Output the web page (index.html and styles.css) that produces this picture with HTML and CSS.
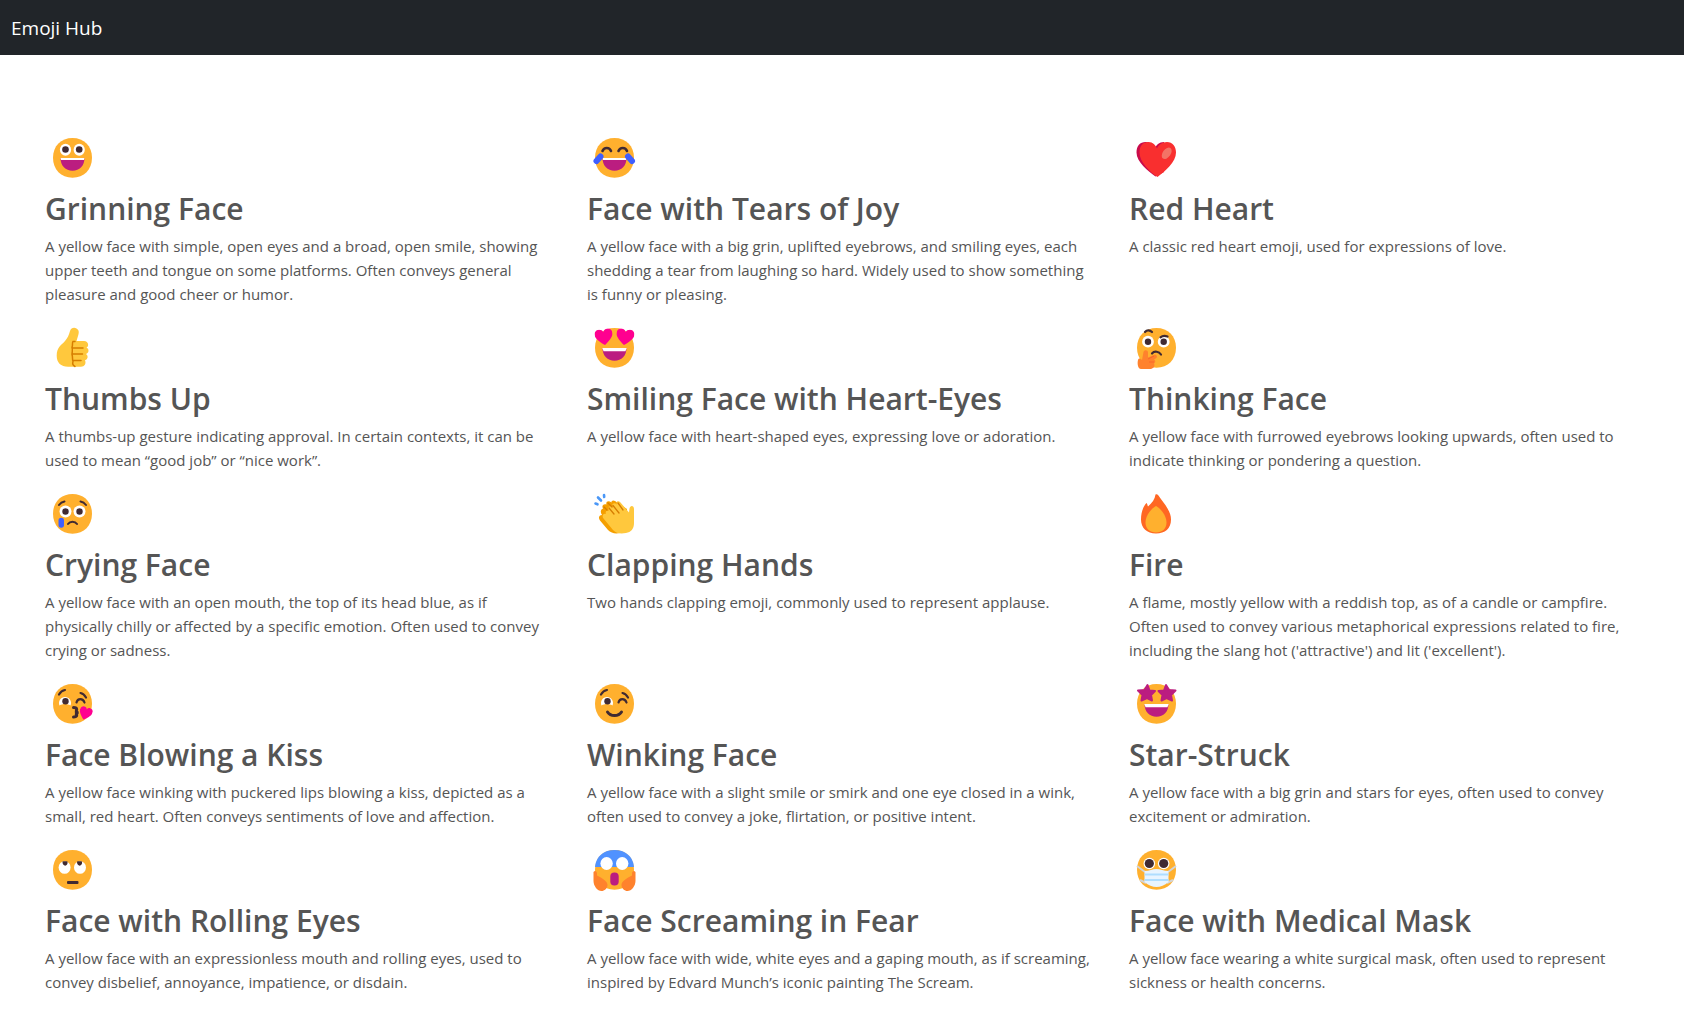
FILE: index.html
```html
<!DOCTYPE html>
<html lang="en">
<head>
<meta charset="utf-8">
<meta name="viewport" content="width=device-width, initial-scale=1">
<title>Emoji Hub</title>
<link rel="stylesheet" href="styles.css">
</head>
<body>
<svg class="sprite" aria-hidden="true">
  <symbol id="face" viewBox="0 0 56 56"><path d="M27.5 6C39 6 47 14 47 25.8S39 45.7 27.5 45.7 8 37.6 8 25.8 16 6 27.5 6z" fill="#ffb02e"/></symbol>
  <symbol id="grin" viewBox="0 0 56 56"><path d="M15.500 26h24c0 8-5 12.700-12 12.700S15.500 34 15.500 26z" fill="#bb1d80"/><path d="M15.500 26h24l-.5 2H16z" fill="#fff"/></symbol>
  <symbol id="heart" viewBox="0 0 20 18" preserveAspectRatio="none"><path d="M10 18C6 15 0 10 0 5.500 0 2 2.500 0 5.200 0 7.500 0 9.200 1.300 10 3.200 10.800 1.300 12.500 0 14.800 0 17.500 0 20 2 20 5.500 20 10 14 15 10 18z"/></symbol>
</svg>
<header class="navbar"><a class="brand" href="#">Emoji Hub</a></header>
<main class="grid">
  <article class="card">
    <svg class="emoji" viewBox="0 0 56 56" aria-hidden="true"><use href="#face"/><use href="#grin"/><g fill="#fff"><ellipse cx="20.500" cy="17.700" rx="5.600" ry="6"/><ellipse cx="34.200" cy="17.700" rx="5.600" ry="6"/></g><g fill="#402a32"><circle cx="20.500" cy="17.500" r="3.300"/><circle cx="34.200" cy="17.500" r="3.300"/></g></svg>
    <h2>Grinning Face</h2>
    <p>A yellow face with simple, open eyes and a broad, open smile, showing upper teeth and tongue on some platforms. Often conveys general pleasure and good cheer or humor.</p>
  </article>
  <article class="card">
    <svg class="emoji" viewBox="0 0 56 56" aria-hidden="true"><use href="#face"/><use href="#grin"/><g fill="none" stroke-linecap="round"><path d="M15.500 19c1.500-4 7-4 8.500 0M31.500 19c1.500-4 7-4 8.500 0" stroke="#402a32" stroke-width="2.600"/><path d="M13.500 24.500l-4 4.500M41 24.500l4 4.500" stroke="#3f5fff" stroke-width="6"/></g></svg>
    <h2>Face with Tears of Joy</h2>
    <p>A yellow face with a big grin, uplifted eyebrows, and smiling eyes, each shedding a tear from laughing so hard. Widely used to show something is funny or pleasing.</p>
  </article>
  <article class="card">
    <svg class="emoji" viewBox="0 0 56 56" aria-hidden="true"><path d="M26.500 44.500C19 39 7.500 30 7.500 20.500 7.500 14 11 10 16.500 10c4.500 0 8 3 9.500 6.500C27 13 30 10 35 10v30z" fill="#ca0b4a"/><path d="M28.500 45C21 40 10.500 30 10.500 20.500 10.500 14 14 10 19.500 10c4.500 0 7 3 8.500 6.500C29.500 13 33 10 38 10c5.500 0 9 4.500 9 10.500C47 30 36.500 39 28.500 45z" fill="#f92f2f"/><ellipse cx="37.700" cy="21.300" rx="4" ry="6.500" transform="rotate(35 37.700 21.300)" fill="#f37366"/></svg>
    <h2>Red Heart</h2>
    <p>A classic red heart emoji, used for expressions of love.</p>
  </article>
  <article class="card">
    <svg class="emoji" viewBox="0 0 56 56" aria-hidden="true"><path d="M25 9c1-3 4-4 6.500-2.500 3 1.700 2.500 4.500 1.500 7.500l-1.500 5H39c5 0 5 6 2.500 6.500 3 1.500 2.500 5.500-.5 6.500 2.500 1.500 2 5.500-1 6.300 1.500 3-.5 6.500-4 6.500H23c-7 0-11.300-4-11.300-11 0-9 5-10.800 8.300-14.800C22.500 16 24 13 25 9z" fill="#ffc83d"/><path d="M30 19.500h-2c-1 1 0 3-1 6 1 3 0 4 0 7 1 3 0 4 1 7-1 3 0 4 2 5M28 26h10M28 32h9.500M28 38.500h8" fill="none" stroke="#d67d00" stroke-width="1.500" stroke-linecap="round"/></svg>
    <h2>Thumbs Up</h2>
    <p>A thumbs-up gesture indicating approval. In certain contexts, it can be used to mean “good job” or “nice work”.</p>
  </article>
  <article class="card">
    <svg class="emoji" viewBox="0 0 56 56" aria-hidden="true"><use href="#face"/><use href="#grin"/><path d="M15.500 26c8 1.500 16 1.500 24 0l-1 3.200H16.500z" fill="#fff"/><g fill="#ff0090"><use href="#heart" x="8" y="7" width="18" height="16" transform="rotate(-8 17 15)"/><use href="#heart" x="29" y="7" width="18" height="16" transform="rotate(8 38 15)"/></g></svg>
    <h2>Smiling Face with Heart-Eyes</h2>
    <p>A yellow face with heart-shaped eyes, expressing love or adoration.</p>
  </article>
  <article class="card">
    <svg class="emoji" viewBox="0 0 56 56" aria-hidden="true"><use href="#face"/><g fill="#fff"><circle cx="19" cy="19.700" r="5.900"/><circle cx="34.700" cy="19.700" r="5.900"/></g><g fill="#402a32"><circle cx="19" cy="19.700" r="3.200"/><circle cx="34.700" cy="19.700" r="3.200"/></g><path d="M16 10c2-2.500 5-2 7 0M31.500 15.300c2-1.700 4-2 7-.8M23 31.500c2.500-3 7-2 9 1" fill="none" stroke="#402a32" stroke-width="2.200" stroke-linecap="round"/><path d="M13 38l1.500-8c.5-2.500 4.500-2.500 4.500.5v5l6-2.500c2.500-1 4 2 2 3.200l-2 1.300c2 1 1.500 3 0 4 1.500 3-1 5.500-4 5.500H12c-3 0-4-5-3-9 .6-2 2-2 4 0z" fill="#ff822d"/><path d="M19 37l6-3M20 40h5" stroke="#f9672a" fill="none"/></svg>
    <h2>Thinking Face</h2>
    <p>A yellow face with furrowed eyebrows looking upwards, often used to indicate thinking or pondering a question.</p>
  </article>
  <article class="card">
    <svg class="emoji" viewBox="0 0 56 56" aria-hidden="true"><use href="#face"/><g fill="#fff"><circle cx="20.500" cy="23.500" r="6"/><circle cx="34.500" cy="23.500" r="6"/></g><g fill="#402a32"><circle cx="20.500" cy="23.500" r="3.200"/><circle cx="34.500" cy="23.500" r="3.200"/></g><path d="M14 17c1.500-2 3-3 5.500-3.500M35.500 13.500c2.500.5 4 1.500 5.500 3.500M23 36c2-3 7-3 9 0" fill="none" stroke="#402a32" stroke-width="2" stroke-linecap="round"/><rect x="13.500" y="29.700" width="5.500" height="10" rx="2.700" fill="#3f5fff"/></svg>
    <h2>Crying Face</h2>
    <p>A yellow face with an open mouth, the top of its head blue, as if physically chilly or affected by a specific emotion. Often used to convey crying or sadness.</p>
  </article>
  <article class="card">
    <svg class="emoji" viewBox="0 0 56 56" aria-hidden="true"><path d="M15 27c-3 0-4 3-2 5.500l8 9.500c3 3 7 4 12 3l7-7V21L28 13c-2-1.500-4 0-3.500 1.500C21 12 18.500 14 19.500 16.500c-3.500-1-5 1.500-3.500 4-2.500 1-3 4-1 6.500z" fill="#f59f00"/><path d="M19 26c-3-1-4.500 2-2.500 4.500L26 42c3 3.500 8 4 13 3 5-.8 8-4 8-10V21c0-4-4-4-4.500-.5l-.5 4-8.500-10c-2.500-2.500-5-.5-3.500 2-3-2.500-6-.5-4 2.500-4-2-6 .5-4 3.500-2.500-.5-4 1-3 3.500z" fill="#ffc83d"/><path d="M22 20l5 6M26 17.500l6 7.500M31 15l5 7M17 19l3 3M21 15l4 4" fill="none" stroke="#d67d00" stroke-width="1.300" stroke-linecap="round"/><path d="M8.500 15.500l2 .8M11 9.500l3 3M17 7l.2 2" fill="none" stroke="#4a97f7" stroke-width="2.600" stroke-linecap="round"/></svg>
    <h2>Clapping Hands</h2>
    <p>Two hands clapping emoji, commonly used to represent applause.</p>
  </article>
  <article class="card">
    <svg class="emoji" viewBox="0 0 56 56" aria-hidden="true"><path d="M26.500 6.500c2-1 3 1 4 2.500 2.500 4 5.500 7 8 11.500 2.500 4 3.500 7.500 3.500 11 0 9-6 14-15 14s-15-5.500-15-14C12 24 14.500 18 17.500 15c1 1 1 2.500 1.500 3.500C23 15 26 11 26.500 6.500z" fill="#ff6723"/><path d="M27 18c5 2.500 10.500 10 10.500 16.500 0 6.500-4.500 10-10.500 10s-10.500-3.500-10.500-10C16.500 28 22 20.500 27 18z" fill="#ffb02e"/></svg>
    <h2>Fire</h2>
    <p>A flame, mostly yellow with a reddish top, as of a candle or campfire. Often used to convey various metaphorical expressions related to fire, including the slang hot ('attractive') and lit ('excellent').</p>
  </article>
  <article class="card">
    <svg class="emoji" viewBox="0 0 56 56" aria-hidden="true"><use href="#face"/><path d="M14.500 27.500a6 6 0 1 1 11 0c-3-2-8-2-11 0z" fill="#fff"/><circle cx="20.500" cy="23.300" r="3.200" fill="#402a32"/><path d="M14 16.500c1.500-2.500 3-4 6-4.500M35.500 15c2.500.5 4 2 5.500 4.500M31.500 24.500c1-4.500 6.500-4.500 8 0" fill="none" stroke="#402a32" stroke-width="2.200" stroke-linecap="round"/><path d="M28.500 29.500c4.500 0 3.500 3.500 1.500 3.500 3 .5 3 3 0 3 2.500.5 2.500 3-1.500 3" fill="none" stroke="#402a32" stroke-width="3" stroke-linecap="round"/><use href="#heart" x="34" y="29" width="13" height="13" fill="#ff0090" transform="rotate(18 40.500 35.500)"/></svg>
    <h2>Face Blowing a Kiss</h2>
    <p>A yellow face winking with puckered lips blowing a kiss, depicted as a small, red heart. Often conveys sentiments of love and affection.</p>
  </article>
  <article class="card">
    <svg class="emoji" viewBox="0 0 56 56" aria-hidden="true"><use href="#face"/><path d="M14.500 27.500a6 6 0 1 1 11 0c-3-2-8-2-11 0z" fill="#fff"/><circle cx="20.500" cy="23.300" r="3.200" fill="#402a32"/><path d="M14 16.500c1.500-2.500 3-4 6-4.500M35.500 15c2.500.5 4 2 5.500 4.500M31.500 24.500c1-4.500 6.500-4.500 8 0" fill="none" stroke="#402a32" stroke-width="2.200" stroke-linecap="round"/><path d="M20.500 34c3 4.700 11 4.700 14 0" fill="none" stroke="#402a32" stroke-width="3" stroke-linecap="round"/></svg>
    <h2>Winking Face</h2>
    <p>A yellow face with a slight smile or smirk and one eye closed in a wink, often used to convey a joke, flirtation, or positive intent.</p>
  </article>
  <article class="card">
    <svg class="emoji" viewBox="0 0 56 56" aria-hidden="true"><use href="#face"/><use href="#grin"/><path d="M15.500 26c8 1.500 16 1.500 24 0l-1 3.200H16.500z" fill="#fff"/><g fill="#bb1d80" stroke="#bb1d80" stroke-width="2" stroke-linejoin="round"><path d="M18.500 7l2 5.500 5.500.5-4 4 1 5.500-5-2.500-5.500 2.500 1-5.500L9 12.500l6.500-.5z"/><path d="M37 7l-2 5.500-5.500.5 4 4-1 5.500 5-2.500 5.500 2.500-1-5.500 4.500-4.500L40 12z"/></g></svg>
    <h2>Star-Struck</h2>
    <p>A yellow face with a big grin and stars for eyes, often used to convey excitement or admiration.</p>
  </article>
  <article class="card">
    <svg class="emoji" viewBox="0 0 56 56" aria-hidden="true"><use href="#face"/><g fill="#fff"><ellipse cx="19.600" cy="23.500" rx="6" ry="6.300"/><ellipse cx="35" cy="23.500" rx="6" ry="6.300"/></g><path d="M17.500 17.600c1.500-.6 3.500-.6 5 0 1 5.500-5.500 5.500-5 0zM32 17.600c1.500-.6 3.500-.6 5 0 1 5.500-5.500 5.500-5 0z" fill="#402a32"/><rect x="22" y="37" width="11.500" height="3" rx="1" fill="#402a32"/></svg>
    <h2>Face with Rolling Eyes</h2>
    <p>A yellow face with an expressionless mouth and rolling eyes, used to convey disbelief, annoyance, impatience, or disdain.</p>
  </article>
  <article class="card">
    <svg class="emoji" viewBox="0 0 56 56" aria-hidden="true"><use href="#face"/><path d="M8 23C9 12 17 6 27.500 6S46 12 47 23z" fill="#5092ff"/><g fill="#fff"><ellipse cx="19.600" cy="19.500" rx="6.200" ry="6.500"/><ellipse cx="35.200" cy="19.500" rx="6.200" ry="6.500"/></g><rect x="23.300" y="28.500" width="8.400" height="13" rx="4" fill="#bb1d80"/><path d="M6.500 28c1.500-2 3.500-1 3.500 1.500v2c5 2.500 11 6 10.500 10-.5 3-3 5.500-6 5.500-4 0-8-5-8-10zM48.500 28c-1.500-2-3.500-1-3.500 1.500v2c-5 2.500-11 6-10.500 10 .5 3 3 5.500 6 5.500 4 0 8-5 8-10z" fill="#ff822d"/></svg>
    <h2>Face Screaming in Fear</h2>
    <p>A yellow face with wide, white eyes and a gaping mouth, as if screaming, inspired by Edvard Munch’s iconic painting The Scream.</p>
  </article>
  <article class="card">
    <svg class="emoji" viewBox="0 0 56 56" aria-hidden="true"><use href="#face"/><path d="M8 22l8 6M47 22l-8 6M11 36l6 3M44 36l-6 3" stroke="#d3d3d3" stroke-width="2"/><g fill="#fff"><circle cx="20.300" cy="19.500" r="5.800"/><circle cx="34.700" cy="19.500" r="5.800"/></g><g fill="#402a32"><circle cx="20.300" cy="19.500" r="4.600"/><circle cx="34.700" cy="19.500" r="4.600"/></g><path d="M15.500 27c5 0 8-2 12-2s7 2 12 2v11c-4 3.500-8 5-12 5s-8-1.500-12-5z" fill="#e8f4ff"/><path d="M15.500 30.500h24M15.500 36h24" stroke="#aeddff" stroke-width="2"/></svg>
    <h2>Face with Medical Mask</h2>
    <p>A yellow face wearing a white surgical mask, often used to represent sickness or health concerns.</p>
  </article>
</main>
</body>
</html>
```
FILE: styles.css
```css
* { box-sizing: border-box; }
body {
  margin: 0;
  background: #fff;
  color: #555;
  font-family: "Segoe UI", "Open Sans", "Noto Sans", sans-serif;
  font-size: 15px;
  line-height: 24px;
}
.sprite { display: none; }
.navbar {
  display: flex;
  align-items: center;
  height: 55px;
  padding: 0 11px;
  background: #212529;
}
.brand {
  color: #fff;
  font-size: 19px;
  text-decoration: none;
}
.grid {
  display: grid;
  grid-template-columns: repeat(3, minmax(0, 1fr));
  column-gap: 24px;
  padding: 77px 37px 0 45px;
}
.emoji {
  display: block;
  width: 56px;
  height: 56px;
}
h2 {
  margin: 0 0 4px;
  font-size: 30px;
  font-weight: 600;
  line-height: 42px;
}
p {
  margin: 0 0 16px;
  padding-right: 10px;
}
```
